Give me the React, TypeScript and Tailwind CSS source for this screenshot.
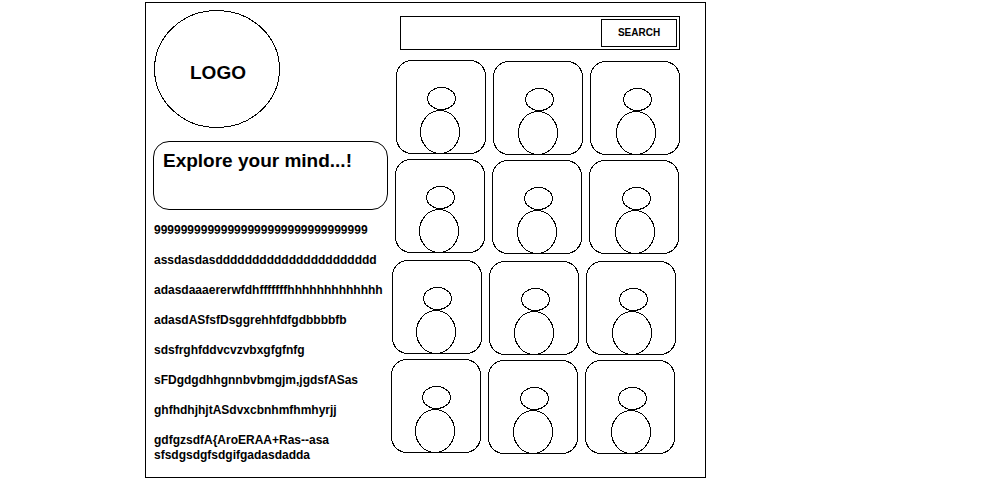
const lines = [
  "99999999999999999999999999999999",
  "assdasdasdddddddddddddddddddddd",
  "adasdaaaererwfdhfffffffhhhhhhhhhhhhh",
  "adasdASfsfDsggrehhfdfgdbbbbfb",
  "sdsfrghfddvcvzvbxgfgfnfg",
  "sFDgdgdhhgnnbvbmgjm,jgdsfASas",
  "ghfhdhjhjtASdvxcbnhmfhmhyrjj",
];

const rows = ["pl-[5px]", "mt-1 pl-1", "mt-1.5 pl-px", "mt-1 pl-0"];
const columns = [
  { offset: "mt-0", shift: 0 },
  { offset: "mt-px", shift: 1 },
  { offset: "mt-px", shift: 2 },
];

function PersonCard({ offset, shift }: { offset: string; shift: number }) {
  return (
    <li className={offset}>
      <svg
        width="90"
        height="94"
        viewBox="0 0 90 94"
        fill="none"
        stroke="black"
        shapeRendering="crispEdges"
        role="img"
        aria-label="Person"
      >
        <rect x="0.5" y="0.5" width="89" height="93" rx="15.5" />
        <ellipse cx={45.5 + shift} cy="38.5" rx="14" ry="11" />
        <ellipse cx={44 + shift} cy="72" rx="19.5" ry="21.5" />
      </svg>
    </li>
  );
}

export default function App() {
  return (
    <div className="min-h-screen bg-white pt-0.5 pl-[145px] font-['Liberation_Sans',Arial,sans-serif] font-bold text-black">
      <main className="flex w-full max-w-[561px] border border-black pt-[7px] pb-3.5 pl-[7px]">
        <section className="w-[235px] shrink-0">
          <div className="ml-px grid w-[126px] place-items-center">
            <svg
              className="col-start-1 row-start-1"
              width="126"
              height="118"
              viewBox="0 0 126 118"
              fill="none"
              stroke="black"
              shapeRendering="crispEdges"
              aria-hidden="true"
            >
              <ellipse cx="63" cy="59" rx="62.5" ry="58.5" />
            </svg>
            <span className="col-start-1 row-start-1 pt-2 pl-0.5 text-[19px] leading-6">
              LOGO
            </span>
          </div>
          <div className="mt-[13px] h-[69px] rounded-[16px] border border-black px-[9px] pt-[7px]">
            <h1 className="text-[19px] leading-6">Explore your mind...!</h1>
          </div>
          <div className="mt-[13px] flex flex-col gap-[15px] pl-px text-[12px] leading-[15px] whitespace-nowrap">
            {lines.map((line) => (
              <p key={line}>{line}</p>
            ))}
            <p>
              gdfgzsdfA{"{"}AroERAA+Ras--asa
              <br />
              sfsdgsdgfsdgifgadasdadda
            </p>
          </div>
        </section>

        <section className="ml-[3px] min-w-0 flex-1 pt-1.5 pr-[25px]">
          <form
            className="ml-[9px] flex h-[34px] border border-black p-0.5"
            onSubmit={(event) => event.preventDefault()}
          >
            <input
              type="text"
              aria-label="Search"
              className="min-w-0 flex-1 px-2 text-[12px] outline-none"
            />
            <button
              type="submit"
              className="w-[76px] shrink-0 border border-black text-[10px] leading-3"
            >
              SEARCH
            </button>
          </form>
          <div className="mt-2.5">
            {rows.map((row) => (
              <ul key={row} className={`flex gap-[7px] ${row}`}>
                {columns.map((column) => (
                  <PersonCard key={column.shift} {...column} />
                ))}
              </ul>
            ))}
          </div>
        </section>
      </main>
    </div>
  );
}
